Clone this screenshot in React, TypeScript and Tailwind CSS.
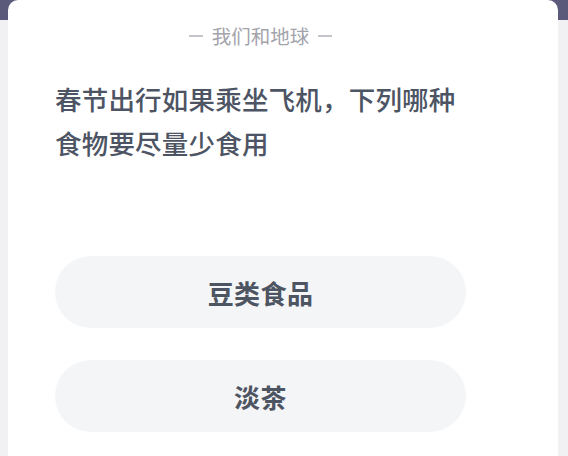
import React from 'react';

const options = ['豆类食品', '淡茶'];

export default function App() {
  return (
    <div
      className="w-[568px] h-[456px] overflow-hidden bg-[linear-gradient(to_bottom,#5b5a7a_20px,#f1f1f4_20px)]"
      style={{ fontFamily: '"Noto Sans CJK SC", "Noto Sans", sans-serif' }}
    >
      <div className="ml-[8px] w-[550px] h-full bg-white rounded-t-[10px]">
        <div className="pl-[47px] w-[458px] flex flex-col">
          <div className="mt-[24px] h-[24px] flex items-center justify-center gap-[9px] text-[#a3a3ab]">
            <span className="block w-[14px] h-[1.5px] bg-[#c4c4cb]" />
            <span className="text-[19.5px] leading-[24px]">我们和地球</span>
            <span className="block w-[14px] h-[1.5px] bg-[#c4c4cb]" />
          </div>
          <p className="mt-[29px] text-[26.5px] leading-[44px] tracking-[0.2px] font-medium text-[#4d5463]">
            春节出行如果乘坐飞机，下列哪种
            <br />
            食物要尽量少食用
          </p>
          <div className="mt-[91px] flex flex-col gap-[32px]">
            {options.map(o => (
              <button
                key={o}
                className="h-[72px] w-[411px] rounded-full bg-[#f4f5f7] text-[26px] font-bold text-[#4d5462] tracking-[0.4px]"
              >
                {o}
              </button>
            ))}
          </div>
        </div>
      </div>
    </div>
  );
}
